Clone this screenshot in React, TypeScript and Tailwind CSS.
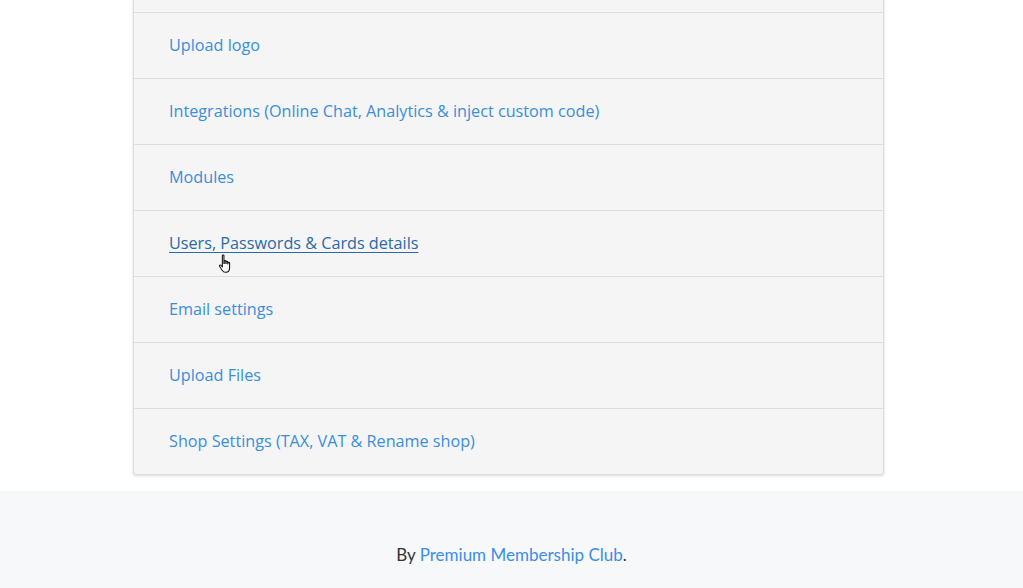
import React from "react";

const items = [
  "",
  "Upload logo",
  "Integrations (Online Chat, Analytics & inject custom code)",
  "Modules",
  "Users, Passwords & Cards details",
  "Email settings",
  "Upload Files",
  "Shop Settings (TAX, VAT & Rename shop)",
];

function HandCursor() {
  return (
    <svg width="15" height="21" viewBox="0 0 14 20" className="absolute left-[49px] top-[23px]">
      <path
        d="M4 1.5c0-.8 1.5-.8 1.5 0V9h.3V6.8c0-.8 1.5-.8 1.5 0V9h.3V7.6c0-.8 1.5-.8 1.5 0V9.4h.3V8.4c0-.8 1.5-.8 1.5 0v5c0 2.2-1.3 4-3.6 4H7c-1.5 0-2.4-.8-3.2-2L1.3 11.6c-.5-.8.6-1.6 1.3-.9L4 12.3z"
        fill="#fff"
        stroke="#111"
        strokeWidth="1"
        strokeLinejoin="round"
      />
    </svg>
  );
}

export default function App() {
  return (
    <div className="w-[1023px] h-[588px] overflow-hidden bg-white flex flex-col" style={{ fontFamily: '"Open Sans", "Noto Sans", sans-serif' }}>
      <div className="flex pl-[133px] pb-[16px]">
        <div className="w-[751px] -mt-[55px] bg-[#f5f5f5] border border-[#dddddd] rounded-b-[3px] shadow-[0_1px_3px_rgba(0,0,0,0.15)]">
          {items.map((item, i) => (
            <div
              key={i}
              className={
                "h-[66px] flex items-center pl-[35px] " +
                (i > 0 ? "border-t border-[#dddddd]" : "")
              }
            >
              {i === 4 ? (
                <span className="relative text-[16.2px] text-[#2a6aa6] underline underline-offset-[3px]">
                  {item}
                  <HandCursor />
                </span>
              ) : (
                <span className="text-[16.2px] text-[#3a8edb]">{item}</span>
              )}
            </div>
          ))}
        </div>
      </div>
      <div className="flex-1 bg-[#f7f8fa] flex justify-center pt-[51px]">
        <p className="text-[17px] text-[#333333]" style={{ fontFamily: 'Lato, "Open Sans", sans-serif' }}>
          By <span className="text-[#3a8ee6]">Premium Membership Club</span>.
        </p>
      </div>
    </div>
  );
}
